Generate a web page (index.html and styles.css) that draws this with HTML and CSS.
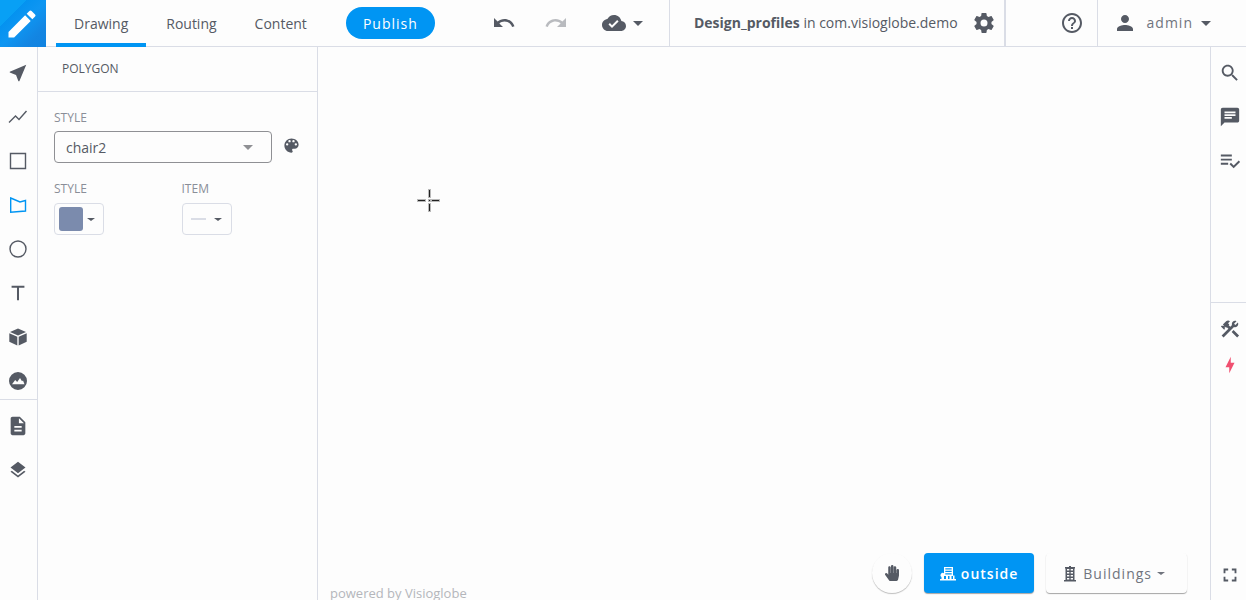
FILE: index.html
```
<!DOCTYPE html>
<html lang="en">

<head>
  <meta charset="UTF-8">
  <meta name="viewport" content="width=device-width, initial-scale=1.0">
  <title>Design_profiles</title>
  <link rel="stylesheet" href="styles.css">
</head>

<body>
  <header class="topbar">
    <a class="logo" href="#" aria-label="Home">
      <svg width="36" height="36" viewBox="0 0 24 24"><path d="M3 17.25V21h3.75L17.81 9.94l-3.75-3.75L3 17.25zM20.71 7.04a1 1 0 0 0 0-1.41l-2.34-2.34a1 1 0 0 0-1.41 0l-1.83 1.83 3.75 3.75 1.83-1.83z"/></svg>
    </a>
    <nav class="tabs">
      <a class="tab active" href="#">Drawing</a>
      <a class="tab" href="#">Routing</a>
      <a class="tab" href="#">Content</a>
    </nav>
    <button class="publish">Publish</button>

    <div class="history">
      <button class="icon-btn" aria-label="Undo">
        <svg width="24" height="24" viewBox="0 0 24 24"><path d="M12.5 8c-2.65 0-5.05.99-6.9 2.6L2 7v9h9l-3.62-3.62c1.39-1.16 3.16-1.88 5.12-1.88 3.54 0 6.55 2.31 7.6 5.5l2.37-.78C21.08 11.03 17.15 8 12.5 8z"/></svg>
      </button>
      <button class="icon-btn disabled" aria-label="Redo" disabled>
        <svg width="24" height="24" viewBox="0 0 24 24"><path d="M18.4 10.6C16.55 8.99 14.15 8 11.5 8c-4.65 0-8.58 3.03-9.96 7.22L3.9 16c1.05-3.19 4.05-5.5 7.6-5.5 1.95 0 3.73.72 5.12 1.88L13 16h9V7l-3.6 3.6z"/></svg>
      </button>
      <button class="icon-btn save" aria-label="Save">
        <svg width="24" height="24" viewBox="0 0 24 24"><path d="M19.35 10.04C18.67 6.59 15.64 4 12 4 9.11 4 6.6 5.64 5.35 8.04 2.34 8.36 0 10.91 0 14c0 3.31 2.69 6 6 6h13c2.76 0 5-2.24 5-5 0-2.64-2.05-4.78-4.65-4.96zM10 17l-3.5-3.5 1.41-1.41L10 14.17 15.18 9l1.41 1.41L10 17z"/></svg>
        <span class="caret"></span>
      </button>
    </div>

    <div class="project">
      <span><b>Design_profiles</b> in com.visioglobe.demo</span>
      <button class="icon-btn" aria-label="Settings">
        <svg width="24" height="24" viewBox="0 0 24 24"><path d="M12 15.5A3.5 3.5 0 0 1 8.5 12 3.5 3.5 0 0 1 12 8.5a3.5 3.5 0 0 1 3.5 3.5 3.5 3.5 0 0 1-3.5 3.5m7.43-2.53c.04-.32.07-.64.07-.97 0-.33-.03-.66-.07-1l2.11-1.63c.19-.15.24-.42.12-.64l-2-3.46c-.12-.22-.39-.31-.61-.22l-2.49 1c-.52-.39-1.06-.73-1.69-.98l-.37-2.65A.506.506 0 0 0 14 2h-4c-.25 0-.46.18-.5.42l-.37 2.65c-.63.25-1.17.59-1.69.98l-2.49-1c-.22-.09-.49 0-.61.22l-2 3.46c-.13.22-.07.49.12.64L4.57 11c-.04.34-.07.67-.07 1 0 .33.03.65.07.97l-2.11 1.66c-.19.15-.25.42-.12.64l2 3.46c.12.22.39.3.61.22l2.49-1.01c.52.4 1.06.74 1.69.99l.37 2.65c.04.24.25.42.5.42h4c.25 0 .46-.18.5-.42l.37-2.65c.63-.26 1.17-.59 1.69-.99l2.49 1.01c.22.08.49 0 .61-.22l2-3.46c.12-.22.07-.49-.12-.64l-2.11-1.66z"/></svg>
      </button>
    </div>

    <div class="help">
      <button class="icon-btn" aria-label="Help">
        <svg width="24" height="24" viewBox="0 0 24 24"><path d="M11 18h2v-2h-2v2zm1-16C6.48 2 2 6.48 2 12s4.48 10 10 10 10-4.48 10-10S17.52 2 12 2zm0 18c-4.41 0-8-3.59-8-8s3.59-8 8-8 8 3.59 8 8-3.59 8-8 8zm0-14c-2.21 0-4 1.79-4 4h2c0-1.1.9-2 2-2s2 .9 2 2c0 2-3 1.75-3 5h2c0-2.25 3-2.5 3-5 0-2.21-1.79-4-4-4z"/></svg>
      </button>
    </div>

    <button class="user">
      <svg width="24" height="24" viewBox="0 0 24 24"><path d="M12 12c2.21 0 4-1.79 4-4s-1.79-4-4-4-4 1.79-4 4 1.79 4 4 4zm0 2c-2.67 0-8 1.34-8 4v2h16v-2c0-2.66-5.33-4-8-4z"/></svg>
      <span class="user-name">admin</span>
      <span class="caret"></span>
    </button>
  </header>

  <main class="workspace">
    <aside class="toolbar left">
      <div class="tools">
        <button class="tool" aria-label="Select">
          <svg width="22" height="22" viewBox="0 0 24 24"><path d="M21 3L3 10.53v.98l6.84 2.65L12.48 21h.98L21 3z"/></svg>
        </button>
        <button class="tool" aria-label="Line">
          <svg class="outline" width="20" height="20" viewBox="0 0 20 20"><path d="M1 15.500l6.500-6.500 3.500 3.500 7.500-8.500"/></svg>
        </button>
        <button class="tool" aria-label="Rectangle">
          <svg class="outline" width="20" height="20" viewBox="0 0 20 20"><path d="M2.500 2.500h15v15h-15z"/></svg>
        </button>
        <button class="tool active" aria-label="Polygon">
          <svg class="outline" width="20" height="20" viewBox="0 0 20 20"><path d="M2.700 3l9.300 4 5.500-1.500v10.500l-14.800 1.300z"/></svg>
        </button>
        <button class="tool" aria-label="Circle">
          <svg class="outline" width="20" height="20" viewBox="0 0 20 20"><circle cx="10" cy="10" r="8"/></svg>
        </button>
        <button class="tool" aria-label="Text">
          <svg width="22" height="22" viewBox="0 0 24 24"><path d="M5 4v2.200h5.900V20h2.200V6.200H19V4z"/></svg>
        </button>
        <button class="tool" aria-label="Model">
          <svg width="20" height="20" viewBox="0 0 20 20"><path d="M10 1.500L18 5l-8 3.600L2 5zM1.300 6.200l8 3.600v8.700l-8-3.700zM18.700 6.200l-8 3.600v8.700l8-3.700z"/></svg>
        </button>
        <button class="tool" aria-label="Image">
          <svg width="20" height="20" viewBox="0 0 20 20"><path fill-rule="evenodd" d="M10 1a9 9 0 1 0 0 18 9 9 0 0 0 0-18zM4 13.200l3.200-4.200 2 2 2.800-4 2 3.200 1-.800 1.500 3.800z"/></svg>
        </button>
      </div>
      <div class="tools">
        <button class="tool" aria-label="Document">
          <svg width="22" height="22" viewBox="0 0 24 24"><path d="M14 2H6c-1.100 0-2 .9-2 2v16c0 1.100.9 2 2 2h12c1.100 0 2-.9 2-2V8l-6-6zm2 16H8v-2h8v2zm0-4H8v-2h8v2zm-3-5V3.500L18.500 9H13z"/></svg>
        </button>
        <button class="tool" aria-label="Layers">
          <svg width="20" height="20" viewBox="0 0 24 24"><path d="M11.990 18.540l-7.370-5.730L3 14.070l9 7 9-7-1.630-1.270-7.380 5.740zM12 16l7.360-5.730L21 9l-9-7-9 7 1.630 1.270L12 16z"/></svg>
        </button>
      </div>
    </aside>

    <section class="panel">
      <h2 class="panel-title">POLYGON</h2>
      <div class="panel-body">
        <label class="label" for="style-select">STYLE</label>
        <div class="style-row">
          <div class="select-box">
            <select id="style-select">
              <option>chair2</option>
            </select>
            <span class="caret"></span>
          </div>
          <button class="icon-btn palette" aria-label="Edit palette">
            <svg width="19" height="19" viewBox="0 0 24 24"><path fill-rule="evenodd" d="M12 3c-4.970 0-9 4.030-9 9s4.030 9 9 9c.83 0 1.500-.67 1.500-1.500 0-.39-.15-.74-.39-1.010-.23-.26-.38-.61-.38-.99 0-.83.67-1.500 1.500-1.500H16c2.760 0 5-2.240 5-5 0-4.420-4.030-8-9-8zm-5.500 9a1.500 1.500 0 1 1 0-3 1.500 1.500 0 0 1 0 3zm3-4a1.500 1.500 0 1 1 0-3 1.500 1.500 0 0 1 0 3zm5 0a1.500 1.500 0 1 1 0-3 1.500 1.500 0 0 1 0 3zm3 4a1.500 1.500 0 1 1 0-3 1.500 1.500 0 0 1 0 3z"/></svg>
          </button>
        </div>
        <div class="pickers">
          <div>
            <label class="label" for="fill-picker">STYLE</label>
            <button class="picker" id="fill-picker">
              <span class="swatch"></span>
              <span class="caret small"></span>
            </button>
          </div>
          <div>
            <label class="label" for="item-picker">ITEM</label>
            <button class="picker item" id="item-picker">
              <span class="stroke"></span>
              <span class="caret small"></span>
            </button>
          </div>
        </div>
      </div>
    </section>

    <section class="map">
      <svg class="crosshair" width="24" height="24" viewBox="0 0 24 24">
        <path class="halo" d="M11 1h3v9h-3zM11 15h3v9h-3zM0 11h9v3H0zM14 11h9v3h-9zM11 11h3v3h-3z"/>
        <path class="ink" d="M12 2h1v7h-1zM12 16h1v7h-1zM1 12h7v1H1zM15 12h7v1h-7zM12 12h1v1h-1z"/>
      </svg>
      <span class="credit">powered by Visioglobe</span>
      <div class="map-controls">
        <button class="pan" aria-label="Pan">
          <svg width="16" height="16" viewBox="0 0 448 512"><path d="M408.781 128.007C386.356 127.578 368 146.360 368 168.790V256h-8V79.790c0-22.430-18.356-41.212-40.781-40.783C297.488 39.423 280 57.169 280 79v177h-8V40.790C272 18.360 253.644-.422 231.219.007 209.488.423 192 18.169 192 40v216h-8V80.790c0-22.430-18.356-41.212-40.781-40.783C121.488 40.423 104 58.169 104 80v235.992l-31.648-43.519c-12.993-17.866-38.009-21.817-55.877-8.823-17.865 12.994-21.815 38.010-8.822 55.877l125.601 172.705A48 48 0 0 0 172.073 512h197.590c22.274 0 41.622-15.324 46.724-37.006l26.508-112.660a192.011 192.011 0 0 0 5.104-43.975V168c.001-21.831-17.487-39.577-39.218-39.993z"/></svg>
        </button>
        <button class="floor outside">
          <svg width="16" height="16" viewBox="0 0 16 16"><path fill-rule="evenodd" d="M4 1h9v8.500h1.500V13H16v1.500H0V13h1.500v-2A2 2 0 1 1 4 7.300zM5.300 2.300v1.200h6.400V2.300zM5.300 4.800V6h6.400V4.800zM5.300 7.300v1.200h6.400V7.300zM4 10v3h2v-3zM8 10v3h1.500v-3zM11.500 10v3H13v-3z"/></svg>
          <span>outside</span>
        </button>
        <button class="floor buildings">
          <svg width="16" height="16" viewBox="0 0 16 16"><path fill-rule="evenodd" d="M7 0h2v1h4v1.500h-.5V14H14v1.500H2V14h1.500V2.500H3V1h4zM5 3v1.500h2.300V3zM8.700 3v1.500H11V3zM5 6v1.500h2.300V6zM8.700 6v1.500H11V6zM5 9v1.500h2.300V9zM8.700 9v1.500H11V9zM5 12v1.500h2.300V12zM8.700 12v1.500H11V12z"/></svg>
          <span>Buildings</span>
          <span class="caret small"></span>
        </button>
      </div>
    </section>

    <aside class="toolbar right">
      <div class="tools">
        <button class="tool" aria-label="Search">
          <svg width="22" height="22" viewBox="0 0 24 24"><path d="M15.500 14h-.79l-.28-.27C15.410 12.590 16 11.110 16 9.500 16 5.910 13.090 3 9.500 3S3 5.910 3 9.500 5.910 16 9.500 16c1.610 0 3.090-.59 4.230-1.570l.27.28v.79l5 4.990L20.490 19l-4.990-5zm-6 0C7.010 14 5 11.990 5 9.500S7.010 5 9.500 5 14 7.010 14 9.500 11.990 14 9.500 14z"/></svg>
        </button>
        <button class="tool" aria-label="Comments">
          <svg width="22" height="22" viewBox="0 0 24 24"><path d="M20 2H4c-1.100 0-1.990.9-1.990 2L2 22l4-4h14c1.100 0 2-.9 2-2V4c0-1.100-.9-2-2-2zM6 9h12v2H6V9zm8 5H6v-2h8v2zm4-6H6V6h12v2z"/></svg>
        </button>
        <button class="tool" aria-label="Checklist">
          <svg width="22" height="22" viewBox="0 0 24 24"><path d="M14 9.500H2v2h12v-2zm0-4.500H2v2h12V5zM2 16h8v-2H2v2zm19.500-4.500L23 13l-6.990 7-4.510-4.500L13 14l3.010 3 5.490-5.500z"/></svg>
        </button>
      </div>
      <div class="tools tight">
        <button class="tool" aria-label="Tools">
          <svg width="22" height="22" viewBox="0 0 24 24"><path d="M13.780 15.300l6 6 2.110-2.160-6-6-2.110 2.160M17.500 10.100c-.39 0-.81-.05-1.140-.19L4.970 21.250l-2.110-2.110 7.410-7.400L8.500 9.960l-.72.7-1.450-1.410v2.860l-.7.7L2.110 9.250l.7-.7h2.810L4.220 7.140l3.560-3.560C8.950 2.410 10.830 2.410 12 3.580L9.890 5.740l1.410 1.400-.71.71 1.790 1.780 1.820-1.880C14.060 7.420 14 7 14 6.630c0-1.970 1.560-3.520 3.500-3.520.59 0 1.110.14 1.580.42L16.410 6.200l1.500 1.500 2.670-2.670c.28.47.42.97.42 1.600 0 1.920-1.550 3.470-3.500 3.470z"/></svg>
        </button>
        <button class="tool alert" aria-label="Actions">
          <svg width="18" height="18" viewBox="0 0 24 24"><path d="M11 15H6l7-14v8h5l-7 14v-8z"/></svg>
        </button>
      </div>
      <button class="tool fullscreen" aria-label="Fullscreen">
        <svg width="22" height="22" viewBox="0 0 24 24"><path d="M5 5h5v2H7v3H5V5zm9 0h5v5h-2V7h-3V5zm3 9h2v5h-5v-2h3v-3zm-7 3v2H5v-5h2v3h3z"/></svg>
      </button>
    </aside>
  </main>
</body>

</html>
```
FILE: styles.css
```
* {
  box-sizing: border-box;
}

body {
  margin: 0;
  height: 100vh;
  display: flex;
  flex-direction: column;
  background-color: #fdfdfd;
  color: #555a64;
  font-family: "Open Sans", sans-serif;
  font-size: 14px;
  line-height: 20px;
  overflow: hidden;
}

button {
  padding: 0;
  border: none;
  background-color: transparent;
  color: inherit;
  font: inherit;
  cursor: pointer;
}

svg {
  display: block;
  flex: none;
  fill: currentColor;
}

.outline {
  fill: none;
  stroke: currentColor;
  stroke-width: 1.4;
}

.icon-btn {
  display: flex;
  align-items: center;
}

.disabled {
  opacity: 0.4;
}

.caret {
  border: 5px solid transparent;
  border-top-color: currentColor;
  border-bottom: none;
}

.caret.small {
  border-width: 3px 4px 0;
}

/* top bar */
.topbar {
  flex: none;
  display: flex;
  align-items: center;
  height: 47px;
  border-bottom: 1px solid #dadde6;
}

.logo {
  display: flex;
  align-items: center;
  justify-content: center;
  width: 46px;
  height: 47px;
  padding-right: 3px;
  margin-bottom: -1px;
  background: linear-gradient(135deg, #08a0f5 28%, #0492f0 28%, #0e96f2 50%, #1385e2 78%, #1083e0);
  color: white;
}

.tabs {
  display: flex;
  align-self: stretch;
  gap: 2px;
  margin-left: 10px;
}

.tab {
  height: 47px;
  padding: 14px 18px 0;
  color: inherit;
  text-decoration: none;
}

.tab.active {
  border-bottom: 4px solid #0095f3;
}

.publish {
  height: 32px;
  margin-left: 21px;
  padding: 1px 17px 0;
  border-radius: 16px;
  background-color: #0095f3;
  color: white;
  letter-spacing: 1px;
}

.history {
  display: flex;
  align-items: center;
  gap: 28px;
  margin-left: auto;
  margin-right: 26px;
}

.save {
  gap: 7px;
  margin-left: 6px;
}

.project {
  display: flex;
  align-items: center;
  align-self: stretch;
  gap: 14px;
  padding: 0 8px 0 24px;
  border-left: 1px solid #dadde6;
  border-right: 2px solid #dadde6;
}

.help {
  padding: 0 13px 0 54px;
}

.user {
  display: flex;
  align-items: center;
  align-self: stretch;
  padding: 0 35px 0 15px;
  border-left: 1px solid #dadde6;
  letter-spacing: 1px;
}

.user-name {
  margin: 0 8px 0 10px;
  color: #70747d;
}

/* workspace */
.workspace {
  flex: 1;
  display: flex;
  min-height: 0;
}

.toolbar {
  flex: none;
  display: flex;
  flex-direction: column;
}

.toolbar.left {
  width: 38px;
  border-right: 1px solid #dadde6;
}

.toolbar.right {
  width: 36px;
  border-left: 1px solid #dadde6;
}

.tools {
  display: flex;
  flex-direction: column;
  gap: 8px;
  padding-top: 8px;
}

.tools + .tools {
  border-top: 1px solid #dadde6;
}

.tools.tight {
  gap: 0;
}

.right .tools:first-child {
  min-height: 255px;
}

.tool {
  display: flex;
  align-items: center;
  justify-content: center;
  height: 36px;
}

.left .tool {
  padding-right: 1px;
}

.right .tool {
  padding-left: 3px;
}

.tool.active {
  color: #0095f3;
}

.tool.alert {
  color: #f05070;
}

.fullscreen {
  margin-top: auto;
  margin-bottom: 7px;
}

/* side panel */
.panel {
  flex: none;
  width: 280px;
  border-right: 1px solid #dadde6;
}

.panel-title {
  margin: 0;
  padding: 12px 24px;
  border-bottom: 1px solid #dadde6;
  font-size: 12px;
  font-weight: normal;
}

.panel-body {
  padding: 16px;
}

.label {
  display: block;
  margin-bottom: 3px;
  color: #8a8e98;
  font-size: 12px;
}

.style-row {
  display: flex;
  gap: 10px;
}

.select-box {
  position: relative;
  width: 218px;
}

.select-box select {
  display: block;
  width: 100%;
  height: 32px;
  padding: 1px 32px 0 11px;
  border: 1px solid #8f9094;
  border-radius: 4px;
  appearance: none;
  background-color: transparent;
  color: inherit;
  font: inherit;
}

.select-box .caret {
  position: absolute;
  top: 14px;
  right: 19px;
  color: #8f9094;
  pointer-events: none;
}

.palette {
  padding-bottom: 4px;
}

.pickers {
  display: grid;
  grid-template-columns: 1fr 1fr;
  column-gap: 8px;
  margin-top: 16px;
}

.pickers .label {
  margin-bottom: 4px;
}

.picker {
  display: flex;
  align-items: center;
  width: 50px;
  height: 32px;
  gap: 4px;
  padding: 0 4px;
  border: 1px solid #dadde6;
  border-radius: 4px;
}

.picker.item {
  gap: 8px;
  padding: 0 8px;
}

.swatch {
  width: 24px;
  height: 24px;
  border-radius: 3px;
  background-color: #7b8bad;
}

.stroke {
  width: 15px;
  height: 2px;
  background-color: #dadde6;
}

/* map */
.map {
  flex: 1;
  position: relative;
}

.crosshair {
  position: absolute;
  top: 141px;
  left: 99px;
}

.halo {
  fill: #b9b9b9;
}

.ink {
  fill: #222;
}

.credit {
  position: absolute;
  bottom: -3px;
  left: 12px;
  color: #b4b6bb;
  font-size: 13px;
}

.map-controls {
  position: absolute;
  right: 23px;
  bottom: 7px;
  display: flex;
  gap: 12px;
}

.pan {
  display: flex;
  align-items: center;
  justify-content: center;
  width: 40px;
  height: 40px;
  border-radius: 50%;
  box-shadow: 0 1px 1px rgba(0, 0, 0, 0.25);
}

.floor {
  display: flex;
  align-items: center;
  gap: 5px;
  height: 40px;
  padding: 1px 16px 0;
  border-radius: 4px;
  box-shadow: 0 1px 1px rgba(0, 0, 0, 0.35);
  letter-spacing: 1px;
}

.outside {
  background-color: #0095f3;
  color: white;
  font-weight: 600;
}

.buildings {
  padding-right: 22px;
}

.buildings span {
  color: #70747d;
}
```
